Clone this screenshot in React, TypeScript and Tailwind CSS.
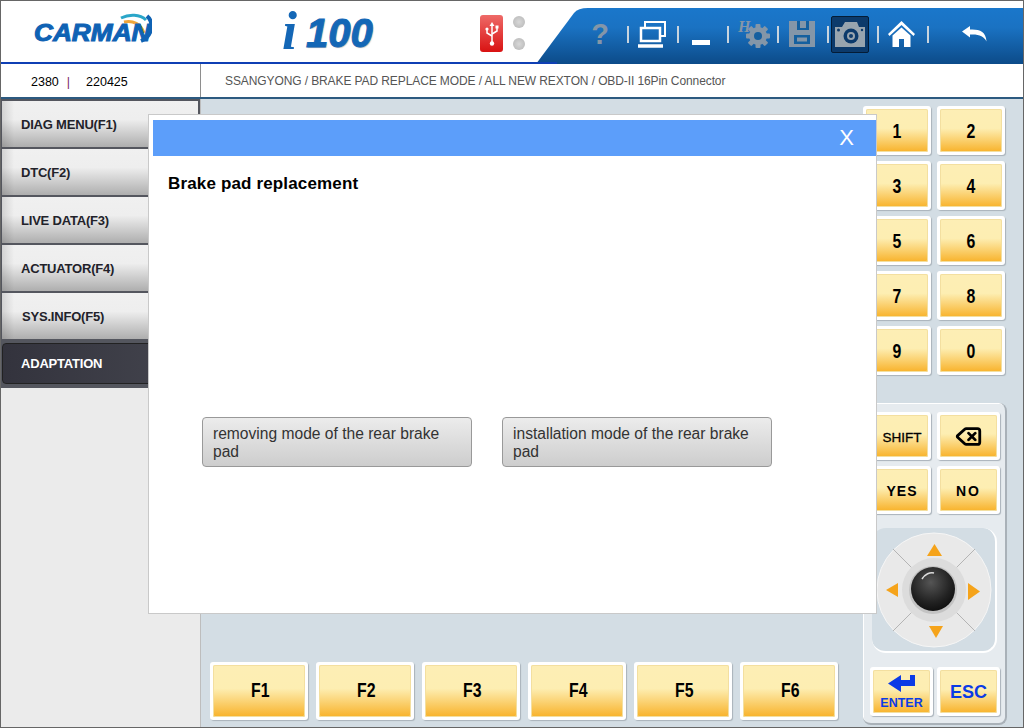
import type { ReactNode } from 'react';
import { Delete } from 'lucide-react';

const FONT = "font-['Liberation_Sans',Arial,sans-serif]";

function Key({ className, children }: { className: string; children: ReactNode }) {
  return (
    <div className={`rounded-[3px] bg-white p-[3px] shadow-[1px_1px_1px_#a9b2ba] ${className}`}>
      <div className="flex h-full w-full items-center justify-center rounded-[2px] bg-[linear-gradient(#fdeeb5_0%,#fdeeb2_45%,#f8b22a_100%)] font-bold text-black shadow-[inset_0_0_0_1px_#f3dfa0]">
        {children}
      </div>
    </div>
  );
}

function Sep() {
  return <div className="h-[17px] w-[2px] shrink-0 bg-[#c8d4de]" />;
}

function Toolbar() {
  return (
    <div className="absolute right-0 top-[7px] h-[56px] w-[487px] bg-[linear-gradient(#1a77cb_0%,#1a72c2_35%,#0c4b89_100%)] [clip-path:path('M0_56L38_5Q42_0_52_0L487_0L487_56Z')]">
      <div className="flex h-full items-center pb-[4px] pl-[37px]">
        {/* help */}
        <div className="flex w-[54px] justify-center text-[29px] font-bold leading-none text-[#8496a8]">?</div>
        <Sep />
        {/* windows */}
        <div className="flex w-[48px] justify-center pr-[2px]">
          <svg width="30" height="27" viewBox="0 0 30 27" fill="none" stroke="#fff" strokeWidth="2">
            <path d="M8 6V1H28V15H23" />
            <rect x="4" y="7" width="19" height="13" strokeWidth="2.5" />
            <path d="M1 25H26" strokeWidth="3.5" />
          </svg>
        </div>
        <Sep />
        {/* minimize */}
        <div className="flex w-[48px] justify-center pr-[4px] pt-[16px]">
          <div className="h-[5px] w-[18px] bg-white" />
        </div>
        <Sep />
        {/* hi-scan settings */}
        <div className="flex w-[48px] justify-center pl-[2px]">
          <svg width="34" height="30" viewBox="0 0 34 30" fill="#8496a8" className="overflow-visible">
            <text x="1" y="13" fontSize="16" fontWeight="700" fontStyle="italic" fontFamily="'Liberation Serif',serif">H</text>
            <g transform="translate(21 17)">
              {[0, 45, 90, 135].map((a) => (
                <rect key={a} x="-2.5" y="-12" width="5" height="24" rx="1" transform={`rotate(${a})`} />
              ))}
              <circle r="9" />
              <circle r="4" fill="#165f9f" />
            </g>
          </svg>
        </div>
        <Sep />
        {/* save */}
        <div className="flex w-[48px] justify-center pr-[2px]">
          <svg width="26" height="26" viewBox="0 0 26 26">
            <path fill="#8496a8" d="M0 0H26V26H0Z" />
            <path fill="#15609f" d="M8 0H11V7H17V0H20V9H8ZM5 14H21V23H5Z" />
            <path fill="#8496a8" d="M8 16.500H18V20.500H8Z" />
          </svg>
        </div>
        <Sep />
        {/* camera */}
        <div className="ml-[2px] mr-[8px] flex h-[37px] w-[38px] shrink-0 items-center justify-center rounded-[2px] border border-[#041c36] bg-[#0c3a6b]">
          <svg width="30" height="26" viewBox="0 0 30 26">
            <path fill="#98a4ae" d="M0 6H7L10 1H22L24 6H30V26H0Z" />
            <circle cx="16" cy="15" r="7.500" fill="#0c3a6b" />
            <circle cx="16" cy="15" r="4" fill="#98a4ae" />
            <circle cx="16" cy="15" r="2" fill="#0c3a6b" />
            <circle cx="3.500" cy="9" r="1.500" fill="#0c3a6b" />
            <circle cx="27" cy="9" r="1.200" fill="#0c3a6b" />
          </svg>
        </div>
        <Sep />
        {/* home */}
        <div className="flex w-[48px] justify-center pr-[4px]">
          <svg width="27" height="26" viewBox="0 0 27 26" fill="#fff">
            <path d="M13.500 0L27 13L25.500 15L13.500 4L1.500 15L0 13Z" />
            <path d="M4.500 14.500L13.500 6.500L22.500 14.500V26H16V18H11V26H4.500Z" />
          </svg>
        </div>
        <Sep />
        {/* back */}
        <div className="flex w-[90px] justify-center">
          <svg width="25" height="16" viewBox="0 0 25 16" fill="none">
            <path d="M0 5.500L8 0V3.500C17 3 24 5 24.500 15.500C22 10 17 8 8 8.500V11.500Z" fill="#fff" />
          </svg>
        </div>
      </div>
    </div>
  );
}

function Header() {
  return (
    <div className="relative h-[63px] shrink-0 border-b-2 border-[#0f3fb4] bg-white">
      {/* logo */}
      <div className="absolute left-[33px] top-[12px] h-[30px] w-[118px]">
        <svg className="absolute right-0 top-0" width="34" height="30" viewBox="0 0 34 30" fill="none">
          <path d="M3 5C11 1 22 1 28 7" stroke="#2aa6c9" strokeWidth="3" />
          <path d="M6 9C15 7 23 11 26 20" stroke="#f0a63a" strokeWidth="3" />
          <path d="M29 3C36 9 35 23 23 28" stroke="#0f62b4" strokeWidth="4" />
        </svg>
        <div className="absolute bottom-[-2px] left-0 origin-left scale-x-[1.14] text-[23px] font-bold italic leading-none text-[#0f62b4] [-webkit-text-stroke:1px_#0f62b4]">
          CARMAN
        </div>
      </div>
      {/* product name */}
      <div className="absolute left-[281px] top-[3px] flex items-end font-bold italic leading-none text-[#1467b6]">
        <span className="font-['Liberation_Serif',serif] text-[54px]">i</span>
        <span className="pb-[5px] pl-[9px] text-[40px] [-webkit-text-stroke:1px_#1467b6] [text-shadow:1px_1px_1px_#bbb]">100</span>
      </div>
      {/* usb status */}
      <div className="absolute left-[479px] top-[14px] flex h-[37px] w-[23px] items-center justify-center rounded-[3px] bg-[linear-gradient(#ee6a68,#d91212)]">
        <svg width="14" height="24" viewBox="0 0 14 24" fill="none" stroke="#fff" strokeWidth="1.5">
          <path d="M7 3V21" />
          <path d="M7 0L9.500 4H4.500Z" fill="#fff" stroke="none" />
          <circle cx="7" cy="21.500" r="2.200" fill="#fff" stroke="none" />
          <path d="M2 8V11L7 14" />
          <path d="M12 6V9L7 12" />
          <circle cx="2" cy="7" r="1.600" fill="#fff" stroke="none" />
          <rect x="10.500" y="3.500" width="3" height="3" fill="#fff" stroke="none" />
        </svg>
      </div>
      <div className="absolute left-[512px] top-[15px] flex h-[34px] flex-col justify-between">
        <div className="h-[12px] w-[12px] rounded-full bg-[radial-gradient(#d8d8d8,#b5b5b5)]" />
        <div className="h-[12px] w-[12px] rounded-full bg-[radial-gradient(#d8d8d8,#b5b5b5)]" />
      </div>
      <Toolbar />
      <div className="absolute bottom-[-2px] left-0 h-[2px] w-[556px] bg-[#0f3fb4]" />
    </div>
  );
}

function InfoBar() {
  return (
    <div className="flex h-[35px] shrink-0 border-b-2 border-[#2c5a80] bg-white">
      <div className="flex w-[200px] items-center border-r border-[#8e8e8e] pl-[30px] pt-[4px] text-[12.5px] text-black">
        <span>2380</span>
        <span className="ml-[8px] text-[#7a1a6a]">|</span>
        <span className="ml-[16px]">220425</span>
      </div>
      <div className="flex items-start pl-[24px] pt-[8px] text-[12px] tracking-[-0.1px] text-[#555]">
        SSANGYONG / BRAKE PAD REPLACE MODE / ALL NEW REXTON / OBD-II 16Pin Connector
      </div>
    </div>
  );
}

const MENU = ['DIAG MENU(F1)', 'DTC(F2)', 'LIVE DATA(F3)', 'ACTUATOR(F4)', 'SYS.INFO(F5)'];

function Sidebar() {
  return (
    <div className="flex w-[200px] shrink-0 flex-col border-r border-[#bdbdbd] bg-[#ebebeb]">
      <div className="bg-[#54565e] pb-[4px] pl-[1px] pr-[2px] pt-[2px]">
        {MENU.map((m, i) => (
          <div
            key={m}
            className={`mb-[2px] flex h-[46px] items-center bg-[linear-gradient(90deg,rgba(0,0,0,.12),transparent_12px),linear-gradient(#f0f0f0_0%,#eeeeee_40%,#aeaeae_100%)] pt-[1px] text-[13px] font-bold tracking-[-0.2px] text-[#22222a] ${i === 4 ? 'pl-[20px]' : 'pl-[19px]'}`}
          >
            {m}
          </div>
        ))}
        <div className="pt-[2px]">
          <div className="flex h-[41px] items-center rounded-[4px] border border-[#222] bg-[linear-gradient(90deg,#33333d,#44454e)] pl-[18px] pt-[1px] text-[13px] font-bold tracking-[-0.2px] text-white">
            ADAPTATION
          </div>
        </div>
      </div>
    </div>
  );
}

function Joystick() {
  return (
    <div className="ml-[9px] mt-[14px] h-[125px] w-[125px] rounded-[14px] border-b-2 border-r-2 border-white bg-[#d3dde4] pl-[4px] pt-[4px]">
      <svg width="116" height="116" viewBox="0 0 116 116">
        <defs>
          <radialGradient id="knob" cx="45%" cy="35%" r="65%">
            <stop offset="0%" stopColor="#555" />
            <stop offset="70%" stopColor="#222" />
            <stop offset="100%" stopColor="#111" />
          </radialGradient>
        </defs>
        <circle cx="58" cy="58" r="57" fill="#e9e9e9" stroke="#f6f6f6" strokeWidth="1" />
        <path d="M17 17L99 99M99 17L17 99" stroke="#b4b4b4" strokeWidth="1" />
        <circle cx="58" cy="58" r="32" fill="#dcdcdc" />
        <circle cx="57" cy="58" r="24" fill="#aaa" opacity=".5" />
        <circle cx="57" cy="57" r="22" fill="url(#knob)" />
        <path d="M46 47C49 42 54 40 58 41" stroke="#ddd" strokeWidth="1.500" fill="none" />
        <path d="M51 24L58.500 12L66 24Z" fill="#f5a31a" />
        <path d="M53 94H67L60 106Z" fill="#f5a31a" />
        <path d="M22 51V65L10 58Z" fill="#f5a31a" />
        <path d="M92 51V68L104 59.500Z" fill="#f5a31a" />
      </svg>
    </div>
  );
}

function RightPanel() {
  return (
    <div className="w-[160px] shrink-0 pt-[7px]">
      <div className="grid grid-cols-[68px_68px] gap-x-[6px] gap-y-[6px] text-[18px]">
        {['1', '2', '3', '4', '5', '6', '7', '8', '9', '0'].map((n) => (
          <Key key={n} className="h-[49px]">
            <span className="pt-[2px] scale-x-[0.88] scale-y-[1.08]">{n}</span>
          </Key>
        ))}
      </div>
      <div className="mt-[28px] h-[322px] w-[144px] rounded-[8px] border-b-2 border-r-2 border-[#a9b1b8] bg-[#e6ebef] pt-[9px] shadow-[inset_1px_1px_0_#fff]">
        <div className="ml-[5px] grid grid-cols-[63px_63px] gap-[6px]">
          <Key className="h-[48px]">
            <span className="pl-[5px] pt-[4px] text-[13.5px] font-normal [-webkit-text-stroke:0.3px_black]">SHIFT</span>
          </Key>
          <Key className="h-[48px]">
            <Delete className="h-[27px] w-[27px]" strokeWidth={2.5} />
          </Key>
          <Key className="h-[48px]">
            <span className="pl-[5px] pt-[2px] text-[14px] tracking-[1px]">YES</span>
          </Key>
          <Key className="h-[48px]">
            <span className="pt-[2px] text-[14px] tracking-[2px]">NO</span>
          </Key>
        </div>
        <Joystick />
        <div className="ml-[7px] mt-[14px] grid grid-cols-[63px_63px] gap-[4px]">
          <Key className="h-[49px]">
            <div className="flex flex-col items-center gap-[5px] pt-[1px] text-[#0b3be6]">
              <svg width="27" height="17" viewBox="0 0 27 17" fill="#0b3be6">
                <path d="M0 8.500L13 0V5H22V0H27V11H13V17Z" />
              </svg>
              <span className="text-[12.5px] leading-[12px]">ENTER</span>
            </div>
          </Key>
          <Key className="h-[49px]">
            <span className="pt-[2px] text-[18px] text-[#0b3be6]">ESC</span>
          </Key>
        </div>
      </div>
    </div>
  );
}

function Modal() {
  return (
    <div className="absolute left-[147px] top-[113px] h-[500px] w-[729px] border border-[#c9c9c9] bg-white pl-[4px] pt-[5px]">
      <div className="flex h-[36px] items-center justify-end bg-[#5c9efa] pb-[2px] pr-[22px] text-[22px] text-white">X</div>
      <div className="pl-[15px] pt-[19px] text-[17px] font-bold leading-[18px] tracking-[0.15px] text-black">Brake pad replacement</div>
      <div className="flex gap-[30px] pl-[49px] pt-[224px]">
        {['removing mode of the rear brake pad', 'installation mode of the rear brake pad'].map((t) => (
          <div
            key={t}
            className="flex h-[50px] w-[270px] items-center rounded-[4px] border border-[#999] bg-[linear-gradient(#ececec,#cdcdcd)] pl-[10px] pr-[15px] pt-[1px] text-[15.6px] leading-[18px] text-[#333]"
          >
            {t}
          </div>
        ))}
      </div>
    </div>
  );
}

export default function App() {
  return (
    <div className={`relative flex h-[728px] w-[1024px] flex-col overflow-hidden border border-[#666] bg-white ${FONT}`}>
      <Header />
      <InfoBar />
      <div className="flex min-h-0 flex-1">
        <Sidebar />
        <div className="flex min-w-0 flex-1 bg-[#d3dde4]">
          <div className="flex flex-1 flex-col justify-end pb-[7px] pl-[9px]">
            <div className="flex gap-[8px] text-[18px]">
              {['F1', 'F2', 'F3', 'F4', 'F5', 'F6'].map((f) => (
                <Key key={f} className="h-[58px] w-[98px]">
                  <span className="pl-[3px] scale-x-[0.88] scale-y-[1.08]">{f}</span>
                </Key>
              ))}
            </div>
          </div>
          <RightPanel />
        </div>
      </div>
      <Modal />
    </div>
  );
}
